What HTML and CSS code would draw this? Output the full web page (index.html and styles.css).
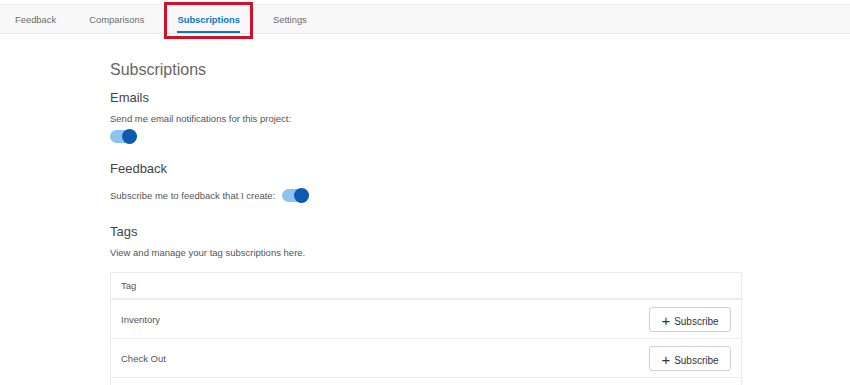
FILE: index.html
```html
<!DOCTYPE html>
<html lang="en">
<head>
    <meta charset="UTF-8">
    <title>Subscriptions</title>
    <link rel="stylesheet" href="styles.css">
</head>
<body>

    <!-- Tabs -->
    <div class="tabs">
        <a class="tab">Feedback</a>
        <a class="tab">Comparisons</a>
        <a class="tab active">Subscriptions</a>
        <a class="tab">Settings</a>
        <div class="highlight"></div>
    </div>

    <div class="content">
        <h1>Subscriptions</h1>

        <h2>Emails</h2>
        <p>Send me email notifications for this project:</p>
        <span class="toggle"><span class="knob"></span></span>

        <h2 class="gap">Feedback</h2>
        <div class="inline">
            <p>Subscribe me to feedback that I create:</p>
            <span class="toggle"><span class="knob"></span></span>
        </div>

        <h2 class="gap tags">Tags</h2>
        <p>View and manage your tag subscriptions here.</p>

        <div class="table">
            <div class="row head">Tag</div>
            <div class="row">
                <span>Inventory</span>
                <button><span class="plus">+</span>Subscribe</button>
            </div>
            <div class="row">
                <span>Check Out</span>
                <button><span class="plus">+</span>Subscribe</button>
            </div>
            <div class="row">
                <span></span>
                <button><span class="plus">+</span>Subscribe</button>
            </div>
        </div>
    </div>

</body>
</html>
```

FILE: styles.css
```css
body {
    margin: 0;
    font-family: "Liberation Sans", Arial, sans-serif;
    background-color: #ffffff;
    color: #444;
    overflow: hidden;
}
.tabs {
    position: relative;
    margin-top: 4px;
    height: 28px;
    display: flex;
    gap: 33px;
    padding-left: 15px;
    background-color: #f8f8f8;
    border-top: 1px solid #efefef;
    border-bottom: 1px solid #e8e8e8;
}
.tab {
    display: flex;
    align-items: center;
    font-size: 9.4px;
    color: #6b6b6b;
    box-sizing: border-box;
    height: 28px;
    padding-top: 1px;
}
.tab.active {
    color: #0b76c5;
    font-weight: bold;
    border-bottom: 2px solid #0b76c5;
    padding-top: 3px;
}
.highlight {
    position: absolute;
    left: 164px;
    top: -3px;
    width: 83px;
    height: 31px;
    border: 3px solid #d0112b;
}
.content {
    width: 632px;
    margin-left: 110px;
    padding-top: 27px;
}
h1 {
    font-size: 16px;
    font-weight: normal;
    color: #666;
    margin: 0 0 11px;
}
h2 {
    font-size: 13px;
    font-weight: normal;
    color: #444;
    margin: 0 0 8px;
}
h2.gap {
    margin-top: 18px;
}
h2.tags {
    margin-top: 22px;
}
p {
    font-size: 9.5px;
    color: #555;
    margin: 0 0 6px;
}
.toggle {
    display: block;
    width: 27px;
    height: 13px;
    border-radius: 7px;
    background-color: #8ec2ef;
    position: relative;
}
.knob {
    position: absolute;
    right: 0;
    top: -1px;
    width: 15px;
    height: 15px;
    border-radius: 50%;
    background-color: #0d5bb0;
}
.inline {
    display: flex;
    align-items: center;
    gap: 7px;
    margin-top: 13px;
}
.inline p {
    margin: 0;
}
.table {
    margin-top: 14px;
    border: 1px solid #ebebeb;
}
.row {
    display: flex;
    justify-content: space-between;
    align-items: center;
    height: 38px;
    padding: 0 10px 0 10px;
    font-size: 9.5px;
    color: #555;
    border-top: 1px solid #eeeeee;
}
.row.head {
    border-top: none;
    height: 25px;
    border-bottom: 1px solid #e8e8e8;
}
button {
    width: 82px;
    height: 25px;
    background-color: #ffffff;
    border: 1px solid #cfcfcf;
    border-radius: 3px;
    font-family: inherit;
    font-size: 10px;
    color: #333;
    cursor: pointer;
}
.plus {
    font-size: 15px;
    margin-right: 4px;
    position: relative;
    top: 1px;
}
```
